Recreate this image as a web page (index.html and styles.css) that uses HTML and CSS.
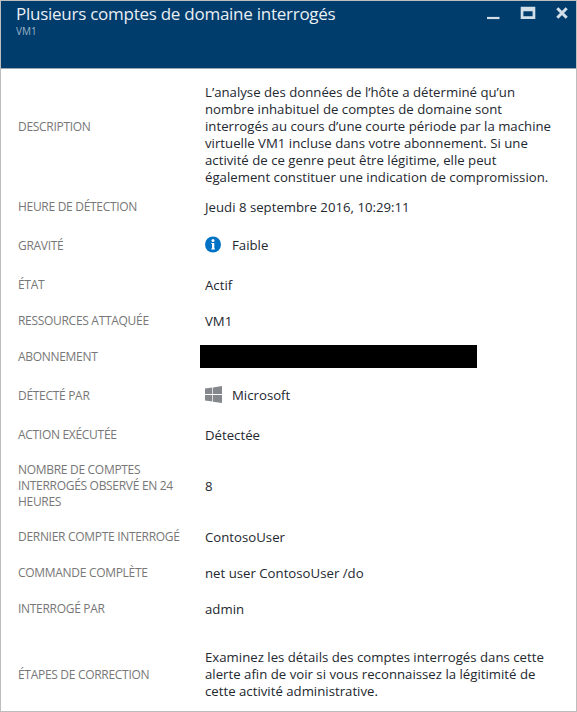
FILE: index.html
```html
<!DOCTYPE html>
<html lang="fr">
<head>
<meta charset="utf-8">
<title>Plusieurs comptes de domaine interrogés</title>
<link rel="stylesheet" href="styles.css">
</head>
<body>
<main class="blade">
  <header class="blade-header">
    <div>
      <h1 class="title">Plusieurs comptes de domaine interrogés</h1>
      <div class="subtitle">VM1</div>
    </div>
    <svg class="controls" width="84" height="20" viewBox="0 0 84 20" fill="none" stroke="#d3dfe8">
      <path d="M1 15H13.5" stroke-width="2.2"/>
      <path d="M34.7 3.8H49.3V16H34.7ZM37.4 8.2V13.2H46.6V8.2Z" fill="#d3dfe8" stroke="none" fill-rule="evenodd"/>
      <path d="M71.3 5.3L80.7 14.7M80.7 5.3L71.3 14.7" stroke-width="3"/>
    </svg>
  </header>
  <dl class="details">
    <div class="row row-description"><dt>DESCRIPTION</dt><dd class="prose">L’analyse des données de l’hôte a déterminé qu’un<br>nombre inhabituel de comptes de domaine sont<br>interrogés au cours d’une courte période par la machine<br>virtuelle VM1 incluse dans votre abonnement. Si une<br>activité de ce genre peut être légitime, elle peut<br>également constituer une indication de compromission.</dd></div>
    <div class="row"><dt>HEURE DE DÉTECTION</dt><dd>Jeudi 8 septembre 2016, 10:29:11</dd></div>
    <div class="row row-icon"><dt>GRAVITÉ</dt><dd>
      <svg class="icon" width="17" height="17" viewBox="0 0 17 17"><circle cx="8" cy="8.5" r="8" fill="#0072c6"/><circle cx="8" cy="4.5" r="1.5" fill="#fff"/><path d="M6.3 7H9.3V12.4H10V13.5H6.2V12.4H7V8H6.3Z" fill="#fff"/></svg>
      <span>Faible</span></dd></div>
    <div class="row"><dt>ÉTAT</dt><dd>Actif</dd></div>
    <div class="row"><dt>RESSOURCES ATTAQUÉE</dt><dd>VM1</dd></div>
    <div class="row"><dt>ABONNEMENT</dt><dd class="redacted"></dd></div>
    <div class="row row-icon"><dt>DÉTECTÉ PAR</dt><dd>
      <svg class="icon" width="17" height="17" viewBox="0 0 17 17" fill="#84878b"><path d="M0 2.5L7.3 1.5V8.1H0ZM8 1.4L17 .1V8.1H8ZM0 8.9H7.3V15.6L0 14.6ZM8 8.9H17V17L8 15.7Z"/></svg>
      <span>Microsoft</span></dd></div>
    <div class="row"><dt>ACTION EXÉCUTÉE</dt><dd>Détectée</dd></div>
    <div class="row row-tall"><dt>NOMBRE DE COMPTES<br>INTERROGÉS OBSERVÉ EN 24<br>HEURES</dt><dd>8</dd></div>
    <div class="row"><dt>DERNIER COMPTE INTERROGÉ</dt><dd>ContosoUser</dd></div>
    <div class="row"><dt>COMMANDE COMPLÈTE</dt><dd>net user ContosoUser /do</dd></div>
    <div class="row"><dt>INTERROGÉ PAR</dt><dd>admin</dd></div>
    <div class="row row-steps"><dt>ÉTAPES DE CORRECTION</dt><dd class="prose">Examinez les détails des comptes interrogés dans cette<br>alerte afin de voir si vous reconnaissez la légitimité de<br>cette activité administrative.</dd></div>
  </dl>
</main>
</body>
</html>
```

FILE: styles.css
```css
* { box-sizing: border-box; }
body { margin: 0; background: #fff; font-family: "Open Sans", "Noto Sans", sans-serif; }
.blade { width: 577px; height: 712px; border: 1px solid #bdbdbd; overflow: hidden; }
.blade-header {
  display: flex;
  justify-content: space-between;
  height: 68px;
  padding: 2px 6px 0 15px;
  background: #003c6c;
  border-bottom: 1px solid #9aa5ad;
}
.title { margin: 0; font-size: 17px; line-height: 22px; font-weight: 400; letter-spacing: -0.26px; color: #e9eff4; white-space: nowrap; }
.subtitle { font-size: 10px; line-height: 12px; color: #9db4c7; }
.details { margin: 0; }
.row {
  display: grid;
  grid-template-columns: 187px 1fr;
  align-items: center;
  height: 36px;
  padding-left: 17px;
}
dt { font-size: 12px; line-height: 16px; letter-spacing: -0.3px; color: #777; white-space: nowrap; }
dd { margin: 0; padding-top: 1px; font-size: 13.2px; line-height: 17px; letter-spacing: 0.01px; color: #24282f; white-space: nowrap; }
.row-description { height: 120px; align-items: start; padding-top: 14px; }
.row-description dt { margin-top: 36px; }
.row-icon { height: 42px; }
.row-icon dd { display: flex; align-items: center; gap: 10px; padding: 0 0 3px; }
.row-icon span { padding-top: 2px; }
.row-tall { height: 66px; }
.row-steps { height: 72px; margin-top: 12px; }
.row-steps dd { padding: 0 0 1px; }
.redacted { width: 277px; height: 23px; margin: -2px 0 0 -5px; background: #000; }
.icon { flex: none; }
```
